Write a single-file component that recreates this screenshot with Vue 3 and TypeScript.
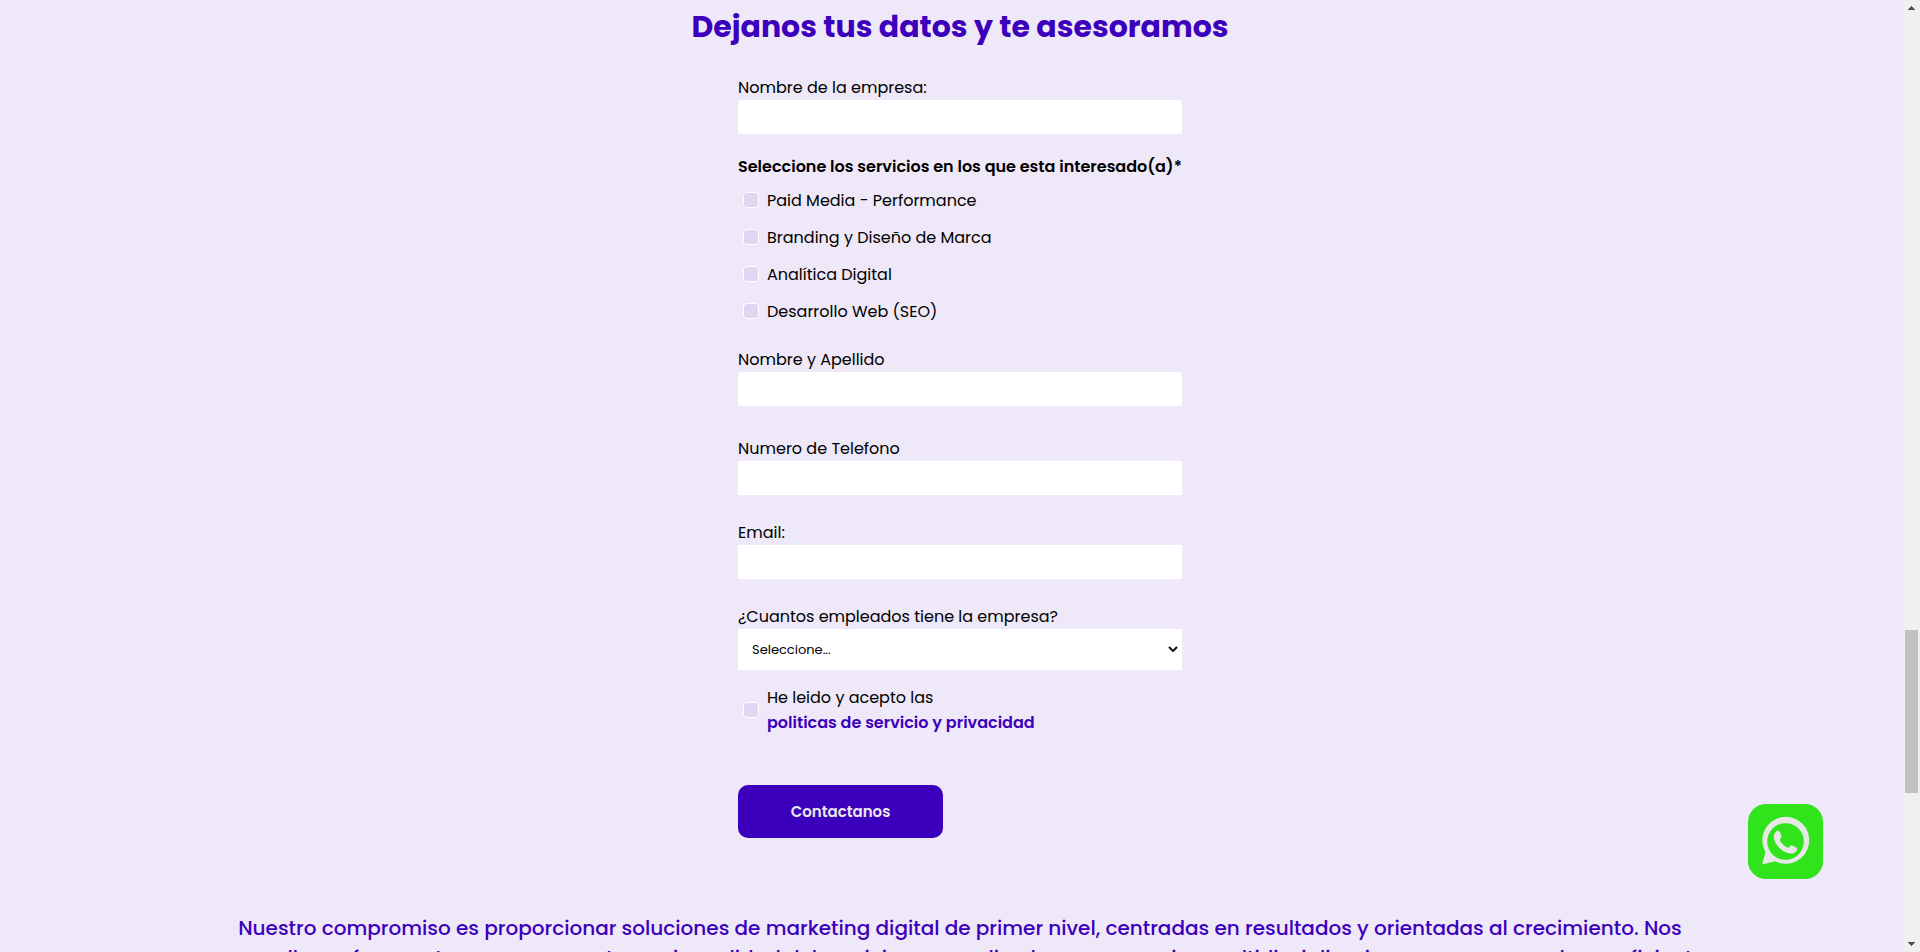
<script setup lang="ts">
import { ref } from 'vue'

const company = ref('')
const services = [
  { id: 'paid', label: 'Paid Media - Performance' },
  { id: 'branding', label: 'Branding y Diseño de Marca' },
  { id: 'analytics', label: 'Analítica Digital' },
  { id: 'web', label: 'Desarrollo Web (SEO)' },
]
const selected = ref<string[]>([])
const fullName = ref('')
const phone = ref('')
const email = ref('')
const employees = ref('')
const accepted = ref(false)
</script>

<template>
  <div class="shell">
    <main class="page">
      <h2 class="title">Dejanos tus datos y te asesoramos</h2>
      <form class="form" @submit.prevent>
        <div class="field">
          <label for="company">Nombre de la empresa:</label>
          <input id="company" v-model="company" class="box" type="text" />
        </div>
        <fieldset class="services">
          <legend>Seleccione los servicios en los que esta interesado(a)*</legend>
          <div v-for="s in services" :key="s.id" class="option">
            <input :id="s.id" v-model="selected" class="tick" type="checkbox" :value="s.id" />
            <label :for="s.id">{{ s.label }}</label>
          </div>
        </fieldset>
        <div class="field name">
          <label for="name">Nombre y Apellido</label>
          <input id="name" v-model="fullName" class="box" type="text" />
        </div>
        <div class="field">
          <label for="phone">Numero de Telefono</label>
          <input id="phone" v-model="phone" class="box" type="tel" />
        </div>
        <div class="field">
          <label for="email">Email:</label>
          <input id="email" v-model="email" class="box" type="email" />
        </div>
        <div class="field staff">
          <label for="employees">¿Cuantos empleados tiene la empresa?</label>
          <div class="select-wrap">
            <select id="employees" v-model="employees">
              <option value="">Seleccione...</option>
            </select>
            <svg class="chevron" viewBox="0 0 10 6" aria-hidden="true">
              <path d="M1 1l4 4 4-4" fill="none" stroke="#111" stroke-width="2" />
            </svg>
          </div>
        </div>
        <div class="consent">
          <input id="accept" v-model="accepted" class="tick" type="checkbox" />
          <div>
            <label for="accept">He leido y acepto las</label>
            <a href="#">politicas de servicio y privacidad</a>
          </div>
        </div>
        <button class="submit" type="submit">Contactanos</button>
      </form>
      <p class="promise">
        Nuestro compromiso es proporcionar soluciones de marketing digital de primer nivel, centradas en resultados y orientadas al crecimiento. Nos
        enorgullece ofrecer a tu empresa nuestra mejor calidad del servicio personalizado, con un equipo multidisciplinario que se encarga de ser eficiente
      </p>
    </main>
    <a class="whatsapp" href="#" aria-label="WhatsApp">
      <svg viewBox="0 0 75 75" aria-hidden="true">
        <rect width="75" height="75" rx="18" fill="#31e31a" />
        <path d="M14 60.500l3.500-12.300A23.500 23.500 0 1 1 27 57.200z" fill="#e8e8e8" />
        <circle cx="37.500" cy="37.500" r="18.300" fill="#31e31a" />
        <path d="M28.500 27.200c1.300-1 2.700-.6 3.300.8l1.700 4.200c.4 1-.8 2.300-1.800 3.500 1.800 3.900 4.800 6.800 8.700 8.300 1.300-1.300 2.400-3.100 3.600-2.600l4.200 2c1.300.7 1 2.300.3 3.600-1.200 2.100-4.200 2.900-6.500 2.400-8.100-1.500-15.200-8.300-16.200-15.700-.3-2.500.8-5 2.700-6.500z" fill="#e8e8e8" />
      </svg>
    </a>
    <div class="scrollbar" aria-hidden="true">
      <svg viewBox="0 0 7 4"><path d="M3 0h1v1h1v1h1v1h1v1H0V3h1V2h1V1h1z" fill="#505050" /></svg>
      <div class="track"><div class="thumb"></div></div>
      <svg viewBox="0 0 7 4"><path d="M0 0h7v1H6v1H5v1H4v1H3V3H2V2H1V1H0z" fill="#505050" /></svg>
    </div>
  </div>
</template>

<style>
body {
  margin: 0;
  background: #eee8f8;
}
</style>

<style scoped>
.shell {
  height: 100vh;
  overflow: hidden;
  color: #000;
  background: #eee8f8;
  font: 400 16px/25px Poppins, Inter, "Noto Sans", sans-serif;
}
.page {
  padding: 4px 16px 0;
  display: flex;
  flex-direction: column;
  align-items: center;
}
.title {
  margin: 0 0 25px;
  color: #3c00bd;
  font-size: 30px;
  font-weight: 700;
  line-height: 46px;
}
.form {
  width: 100%;
  max-width: 444px;
}
.field {
  display: flex;
  flex-direction: column;
  margin-bottom: 25px;
}
.box {
  box-sizing: border-box;
  width: 100%;
  height: 34px;
  padding: 0 12px;
  border: 0;
  border-radius: 2px;
  background: #fff;
  font: inherit;
}
.services {
  margin: -5px 0 17px;
  padding: 0;
  border: 0;
  min-width: 0;
}
.services legend {
  padding: 0;
  margin-bottom: 2px;
  font-weight: 600;
  line-height: 26px;
  white-space: nowrap;
}
.option {
  display: flex;
  align-items: center;
  height: 37px;
}
.tick {
  appearance: none;
  box-sizing: border-box;
  flex: none;
  width: 16px;
  height: 16px;
  margin: 0 8px 0 5px;
  border: 1px solid #fff;
  border-radius: 4px;
  background: #e2d5f2;
}
.option .tick {
  margin-bottom: 1px;
}
.tick:checked {
  background: #3c00bd;
}
.name {
  margin-bottom: 30px;
}
.staff {
  margin-bottom: 15px;
}
.select-wrap {
  position: relative;
}
select {
  appearance: none;
  display: block;
  width: 100%;
  height: 41px;
  padding: 0 14px;
  border: 0;
  border-radius: 0;
  background: #fff;
  color: #000;
  font: inherit;
  font-size: 13px;
}
.chevron {
  position: absolute;
  right: 4px;
  top: 17px;
  width: 10px;
  height: 6px;
  pointer-events: none;
}
.consent {
  display: flex;
  align-items: center;
  margin-bottom: 50px;
}
.consent label,
.consent a {
  display: block;
}
.consent a {
  color: #3c00bd;
  font-weight: 600;
  text-decoration: none;
}
.submit {
  display: block;
  width: 205px;
  height: 53px;
  border: 0;
  border-radius: 10px;
  background: #3c00bd;
  color: #e8e8e8;
  font: inherit;
  font-weight: 600;
  font-size: 15px;
}
.promise {
  max-width: 1500px;
  margin: 75px 0 0;
  color: #3c00bd;
  font-size: 20px;
  font-weight: 500;
  line-height: 30px;
  text-align: center;
}
.whatsapp {
  position: fixed;
  right: 97px;
  bottom: 73px;
  width: 75px;
  height: 75px;
}
.whatsapp svg {
  display: block;
}
.scrollbar {
  position: fixed;
  top: 0;
  right: 0;
  bottom: 0;
  box-sizing: border-box;
  width: 17px;
  padding: 6px 2px;
  display: flex;
  flex-direction: column;
  align-items: center;
  background: #f0f0f0;
}
.scrollbar svg {
  width: 7px;
  height: 4px;
}
.track {
  flex: 1;
  align-self: stretch;
  display: flex;
  flex-direction: column;
}
.track::before {
  content: "";
  flex: 620;
}
.track::after {
  content: "";
  flex: 149;
}
.thumb {
  flex: 163;
  background: #c1c1c1;
}
</style>
